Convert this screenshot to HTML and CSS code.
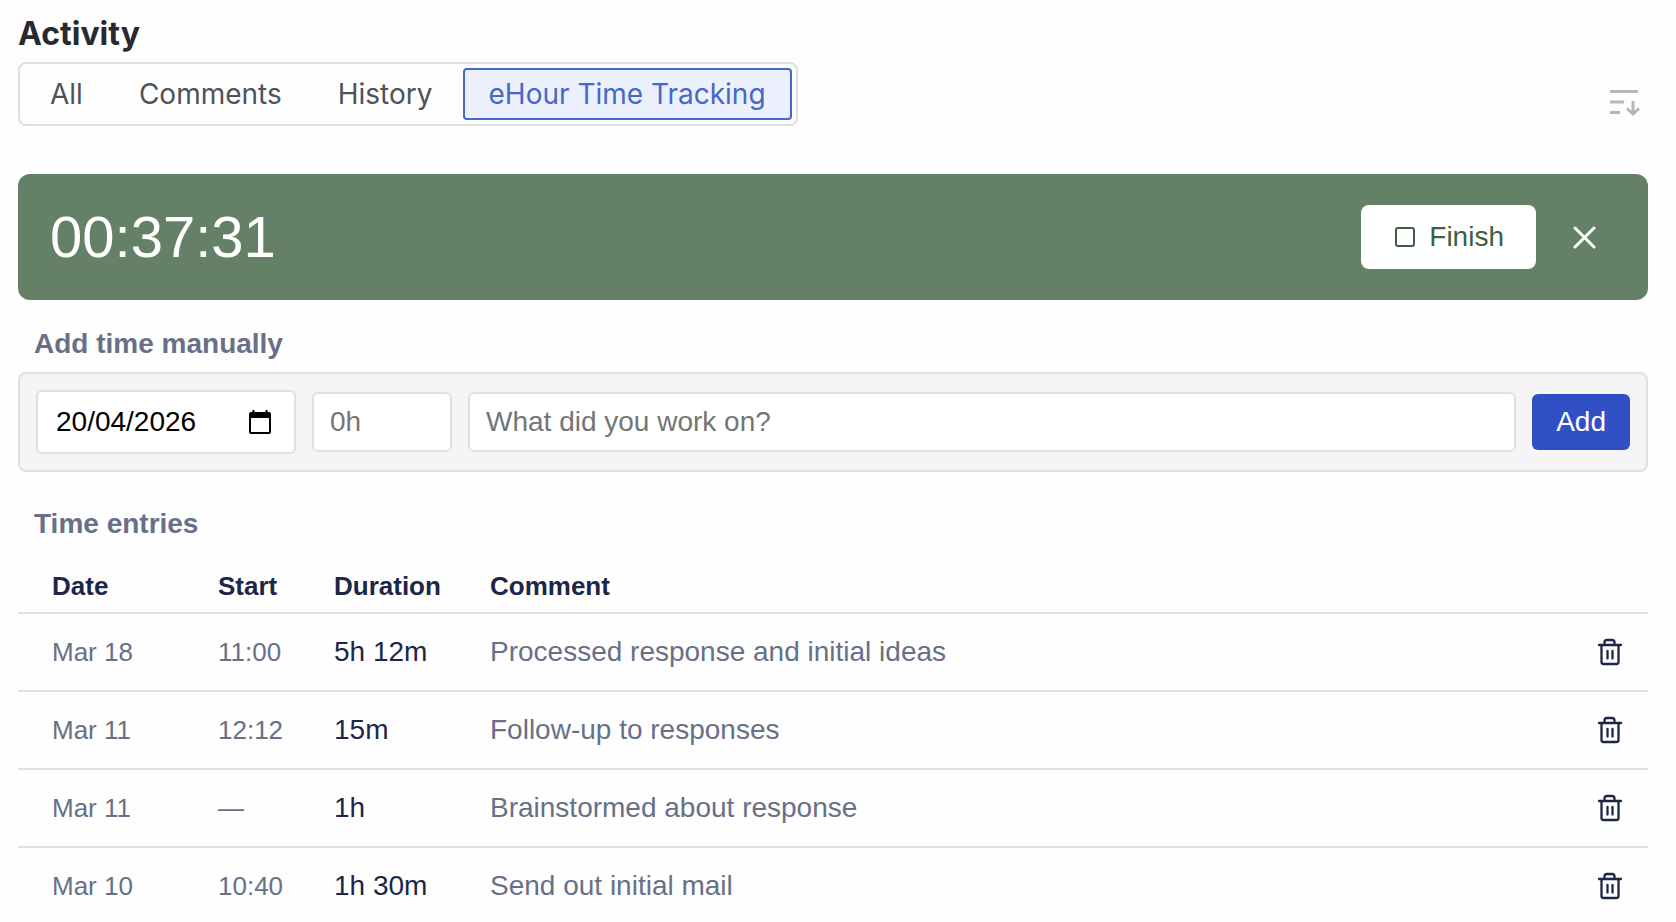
FILE: index.html
```html
<!DOCTYPE html>
<html lang="en">
<head>
    <meta charset="UTF-8">
    <meta name="viewport" content="width=device-width, initial-scale=1.0">
    <title>Activity</title>
    <link rel="stylesheet" href="styles.css">
</head>
<body>
    <svg class="sprite" aria-hidden="true">
        <symbol id="trash" viewBox="0 0 32 32">
            <path d="M5 9h22M10.500 9V6.500a2.500 2.500 0 0 1 2.500-2.500h5a2.500 2.500 0 0 1 2.500 2.500V9M7.500 9v17a2 2 0 0 0 2 2h13a2 2 0 0 0 2-2V9M13.500 15v7.500M18.500 15v7.500" fill="none" stroke="currentColor" stroke-width="2.300" stroke-linecap="round"/>
        </symbol>
    </svg>

    <h1>Activity</h1>
    <div class="toolbar">
        <div class="tabs">
            <button class="tab">All</button>
            <button class="tab">Comments</button>
            <button class="tab">History</button>
            <button class="tab active">eHour Time Tracking</button>
        </div>
        <button class="sort-btn" aria-label="Sort">
            <svg width="32" height="32" viewBox="0 0 32 32" fill="none" stroke="currentColor" stroke-width="3">
                <path d="M2 5.500h28M2 16h14M2 26.500h10M25 15v13M19 22.500l6 5.500 6-5.500"/>
            </svg>
        </button>
    </div>

    <div class="timer">
        <span class="clock">00:37:31</span>
        <button class="finish-btn">
            <svg width="24" height="24" viewBox="0 0 24 24" fill="none" stroke="currentColor" stroke-width="2">
                <rect x="3" y="3" width="18" height="18" rx="2"/>
            </svg>
            Finish
        </button>
        <button class="cancel-btn" aria-label="Cancel">
            <svg width="24" height="24" viewBox="0 0 24 24" fill="none" stroke="currentColor" stroke-width="3" stroke-linecap="round">
                <path d="M3 3l19 19M22 3L3 22"/>
            </svg>
        </button>
    </div>

    <h2>Add time manually</h2>
    <form class="add-form">
        <div class="field date-field">
            <input type="text" aria-label="Date" value="20/04/2026">
            <button type="button" aria-label="Open calendar">
                <svg width="24" height="26" viewBox="0 0 24 26">
                    <path d="M4.500 1h2v2h11V1h2v2H21a2 2 0 0 1 2 2v18a2 2 0 0 1-2 2H3a2 2 0 0 1-2-2V5a2 2 0 0 1 2-2h1.500zM3 9v14h18V9z" fill="currentColor" fill-rule="evenodd"/>
                </svg>
            </button>
        </div>
        <input class="field hours" type="text" aria-label="Duration" placeholder="0h">
        <input class="field comment" type="text" aria-label="Comment" placeholder="What did you work on?">
        <button class="add-btn" type="button">Add</button>
    </form>

    <h2 class="entries-title">Time entries</h2>
    <table>
        <thead>
            <tr>
                <th class="col-date">Date</th>
                <th class="col-start">Start</th>
                <th class="col-duration">Duration</th>
                <th>Comment</th>
                <th class="col-action"></th>
            </tr>
        </thead>
        <tbody>
            <tr>
                <td>Mar 18</td>
                <td>11:00</td>
                <td class="duration">5h 12m</td>
                <td class="text">Processed response and initial ideas</td>
                <td class="action"><button aria-label="Delete"><svg width="32" height="32"><use href="#trash"/></svg></button></td>
            </tr>
            <tr>
                <td>Mar 11</td>
                <td>12:12</td>
                <td class="duration">15m</td>
                <td class="text">Follow-up to responses</td>
                <td class="action"><button aria-label="Delete"><svg width="32" height="32"><use href="#trash"/></svg></button></td>
            </tr>
            <tr>
                <td>Mar 11</td>
                <td>—</td>
                <td class="duration">1h</td>
                <td class="text">Brainstormed about response</td>
                <td class="action"><button aria-label="Delete"><svg width="32" height="32"><use href="#trash"/></svg></button></td>
            </tr>
            <tr>
                <td>Mar 10</td>
                <td>10:40</td>
                <td class="duration">1h 30m</td>
                <td class="text">Send out initial mail</td>
                <td class="action"><button aria-label="Delete"><svg width="32" height="32"><use href="#trash"/></svg></button></td>
            </tr>
        </tbody>
    </table>
</body>
</html>
```
FILE: styles.css
```css
* {
    box-sizing: border-box;
}
body {
    margin: 0;
    padding: 13px 28px 0 18px;
    font-family: "Liberation Sans", Arial, sans-serif;
    font-size: 28px;
    color: #1c2748;
    background-color: #fefefe;
}
button, input {
    font: inherit;
    color: inherit;
    margin: 0;
    padding: 0;
    border: none;
    background: none;
}
button {
    cursor: pointer;
}
svg {
    display: block;
}
.sprite {
    display: none;
}

h1 {
    margin: 0 0 7px;
    font-family: Inter, sans-serif;
    font-size: 32px;
    font-weight: 700;
    line-height: 42px;
    color: #292a2e;
}
h2 {
    margin: 27px 16px 11px;
    font-size: 28px;
    line-height: 34px;
    color: #687087;
}
.entries-title {
    margin: 35px 16px 19px;
}

.toolbar {
    display: flex;
    justify-content: space-between;
    align-items: flex-end;
}
.tabs {
    display: flex;
    gap: 4px;
    padding: 4px;
    border: 2px solid #dddee1;
    border-radius: 8px;
}
.tab {
    padding: 0 24px;
    border: 2px solid transparent;
    border-radius: 4px;
    font-family: Inter, sans-serif;
    line-height: 48px;
    color: #505258;
}
.tab.active {
    border-color: #4668c5;
    background-color: #ebf0fc;
    color: #4668c5;
}
.sort-btn {
    padding: 8px;
    color: #b6b6b9;
}

.timer {
    display: flex;
    align-items: center;
    gap: 16px;
    margin-top: 48px;
    padding: 31px 32px;
    border-radius: 12px;
    background-color: #648067;
    color: #fff;
}
.clock {
    flex: 1;
    font-size: 58px;
    line-height: 62px;
}
.finish-btn {
    display: flex;
    align-items: center;
    gap: 12px;
    padding: 0 32px;
    border-radius: 8px;
    background-color: #fff;
    line-height: 64px;
    color: #3f5f43;
}
.cancel-btn {
    padding: 20px;
}

.add-form {
    display: flex;
    align-items: center;
    gap: 16px;
    padding: 16px;
    border: 2px solid #dfe0e3;
    border-radius: 8px;
    background-color: #f5f5f8;
}
.field {
    height: 60px;
    padding: 0 16px;
    border: 2px solid #dfe0e3;
    border-radius: 6px;
    background-color: #fff;
}
.field::placeholder {
    color: #757575;
    opacity: 1;
}
.date-field {
    display: flex;
    align-items: center;
    width: 260px;
    height: 64px;
    padding: 0 22px 0 18px;
    color: #000;
}
.date-field input {
    flex: 1;
    min-width: 0;
}
.hours {
    width: 140px;
}
.comment {
    flex: 1;
    min-width: 0;
}
.add-btn {
    padding: 0 24px;
    border-radius: 6px;
    background-color: #3150c6;
    line-height: 56px;
    color: #fff;
}

table {
    width: 100%;
    table-layout: fixed;
    border-spacing: 0;
}
th, td {
    padding: 0 16px;
    border-bottom: 2px solid #dfe0e3;
    font-size: 26px;
    text-align: left;
}
th {
    height: 54px;
}
td {
    height: 78px;
    color: #687087;
}
th:first-child, td:first-child {
    padding-left: 34px;
}
td.duration {
    font-size: 28px;
    color: #1c2748;
}
td.text {
    font-size: 28px;
}
td.action {
    padding-right: 22px;
}
.action button {
    display: block;
    margin-left: auto;
    color: #1c2748;
}
.col-date {
    width: 184px;
}
.col-start {
    width: 116px;
}
.col-duration {
    width: 156px;
}
.col-action {
    width: 90px;
}
```
